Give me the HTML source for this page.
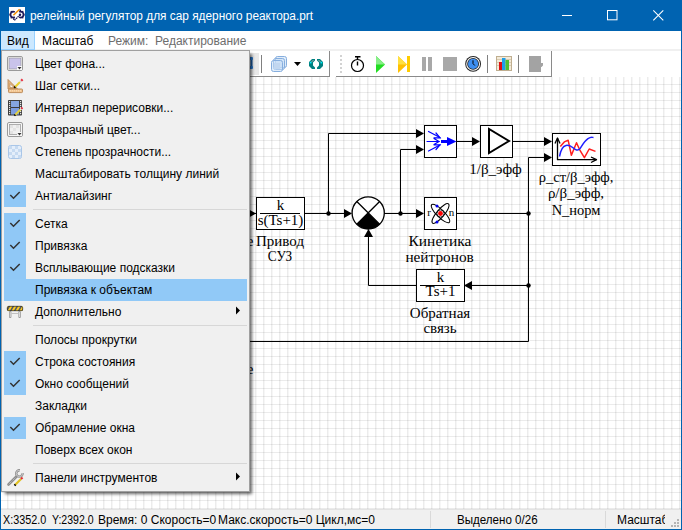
<!DOCTYPE html>
<html><head><meta charset="utf-8">
<style>
*{box-sizing:border-box}
html,body{margin:0;padding:0}
body{width:682px;height:530px;overflow:hidden;position:relative;background:#fff;font-family:"Liberation Sans",sans-serif;font-size:12px;color:#000}
.a{position:absolute}
#title{left:0;top:0;width:682px;height:31px;background:#0063b1}
#title .t{left:30px;top:7px;color:#fff;font-size:12px;white-space:nowrap;line-height:18px;transform:scaleX(.988);transform-origin:0 0}
#menubar{left:1px;top:31px;width:680px;height:19px;background:#fff}
.mi{top:1px;height:19px;line-height:19px;white-space:nowrap}
#tbarea{left:1px;top:50px;width:680px;height:27px;background:#fff;border-top:1px solid #f0f0f0}
#canvas{left:1px;top:77px;width:680px;height:432px;background-color:#fff;
 background-image:linear-gradient(to right,rgba(0,0,0,.075) 1px,rgba(0,0,0,.035) 1px,rgba(0,0,0,.035) 2px,transparent 2px),linear-gradient(to bottom,rgba(0,0,0,.08) 1px,transparent 1px);
 background-size:8px 8px;background-position:6px 7px}
#status{left:1px;top:509px;width:680px;height:20px;background:#f0f0f0;border-top:1px solid #e3e3e3}
#status .s{top:2px;line-height:16px;white-space:pre}
#border{left:0;top:0;width:682px;height:530px;border:1px solid #0063b1;border-top:0}
#menu{left:1px;top:50px;width:249px;height:442px;background:#f0f0f0;border:1px solid #a0a0a0;box-shadow:3px 3px 3px -1px rgba(0,0,0,.6)}
.row{position:absolute;left:0;width:247px;height:22px}
.row .tx{position:absolute;left:33px;top:3px;line-height:16px;white-space:nowrap}
.chk{position:absolute;left:2px;width:22px;background:#90c8f6}
.sep{position:absolute;left:31px;width:214px;height:1px;background:#d7d7d7}
.arr{position:absolute;left:234px;width:0;height:0;border-left:4px solid #000;border-top:4px solid transparent;border-bottom:4px solid transparent}
.serif{font-family:"Liberation Serif",serif;font-size:14.67px;white-space:nowrap;line-height:16px}
</style></head><body>

<div id="title" class="a">
  <svg class="a" style="left:0;top:0" width="682" height="31" viewBox="0 0 682 31">
<rect x="9" y="7" width="16" height="16" fill="#fff"/>
<g fill="none" stroke="#1e1a5a" stroke-width="1.7">
 <path d="M14.8 12.1A2.9 2.9 0 1 0 14.8 17.1"/>
 <path d="M19.2 12.1A2.9 2.9 0 1 1 19.2 17.1"/>
</g>
<g fill="#1e1a5a">
 <rect x="9.6" y="13.8" width="1.6" height="1.6"/><rect x="10.6" y="10.9" width="1.6" height="1.6"/><rect x="10.6" y="16.8" width="1.6" height="1.6"/><rect x="13" y="18.3" width="1.6" height="1.5"/>
 <rect x="22.8" y="13.8" width="1.6" height="1.6"/><rect x="21.8" y="10.9" width="1.6" height="1.6"/><rect x="21.8" y="16.8" width="1.6" height="1.6"/><rect x="19.4" y="9.6" width="1.6" height="1.5"/>
</g>
<path d="M13.4 15.2L19.6 9.3" stroke="#f08c00" stroke-width="1.5"/>
<path d="M14.4 20.4L20 14.8" stroke="#1e1a5a" stroke-width="1.2" stroke-dasharray="1.6 0.6"/>
<circle cx="20" cy="14.8" r="1.2" fill="#1e1a5a"/>
<path d="M562 15.5H572" stroke="#fff" stroke-width="1"/>
<rect x="607.5" y="10.5" width="9.5" height="9.3" fill="none" stroke="#fff" stroke-width="1"/>
<path d="M653.3 10.3L663.3 20.3M663.3 10.3L653.3 20.3" stroke="#fff" stroke-width="1.05"/>
</svg>
<div class="a t">релейный регулятор для сар ядерного реактора.prt</div>
</div>
<div id="menubar" class="a">
  <div class="a" style="left:0;top:0;width:34px;height:19px;background:#cce8ff;border-right:1px solid #99d1ff;border-bottom:1px solid #99d1ff"></div>
  <div class="a mi" style="left:6px">Вид</div>
  <div class="a mi" style="left:41px">Масштаб</div>
  <div class="a mi" style="left:107px;color:#6d6d6d">Режим:&nbsp; Редактирование</div>
</div>
<div id="tbarea" class="a"></div>
<svg class="a" style="left:0;top:0" width="682" height="80" viewBox="0 0 682 80">
<rect x="35" y="49" width="646" height="1" fill="#f0f0f0"/><rect x="1" y="50" width="680" height="1" fill="#f0f0f0"/>
<rect x="237" y="53" width="22" height="22" fill="#e8e8e8"/>
<path d="M251.5 58V68" stroke="#1e5fa8" stroke-width="2"/><rect x="249" y="57" width="4" height="3" rx="1" fill="#2a7ad0"/><rect x="249" y="66" width="4" height="3" rx="1" fill="#2a7ad0"/>
<rect x="261" y="55" width="1" height="18" fill="#808080"/>
<g fill="rgba(200,222,246,.55)" stroke="#86aede" stroke-width="1">
 <rect x="275.5" y="56.5" width="11" height="11" rx="2"/>
 <rect x="273.5" y="58.5" width="11" height="11" rx="2"/>
 <rect x="271.5" y="60.5" width="11" height="11" rx="2"/>
</g>
<rect x="274" y="63" width="6" height="6" fill="#c2d7f0"/>
<path d="M294 62H301L297.5 66Z" fill="#000"/>
<path d="M312 59H315V60.5L313 62.5V65.5L315 67.5V69H312L309 66V62Z M320 59H317V60.5L319 62.5V65.5L317 67.5V69H320L323 66V62Z" fill="#008080"/>
<path d="M311 62.5L313.5 60M321 62.5L318.5 60" stroke="#d8b8b0" stroke-width="0.8"/>
<rect x="309.8" y="61.8" width="1.6" height="1.6" fill="#00f0ff"/><rect x="320.6" y="61.8" width="1.6" height="1.6" fill="#00f0ff"/>
<rect x="1" y="76" width="329" height="1" fill="#8a8a8a"/><rect x="329" y="51" width="1" height="26" fill="#8a8a8a"/>
<rect x="336" y="76" width="216" height="1" fill="#8a8a8a"/><rect x="551" y="51" width="1" height="26" fill="#8a8a8a"/>
<g fill="#d2d2d2"><rect x="340" y="55" width="2" height="2"/><rect x="340" y="59" width="2" height="2"/><rect x="340" y="63" width="2" height="2"/><rect x="340" y="67" width="2" height="2"/><rect x="340" y="71" width="2" height="2"/></g>
<g stroke="#000" fill="none" stroke-width="1.2">
 <circle cx="357.5" cy="65.5" r="6"/>
 <path d="M355 56.7H360.5M357.5 56.7V59.5M357.5 61.5V65.5" stroke-width="1.4"/>
</g>
<path d="M376 56L385 64.5L376 73Z" fill="#22dd22"/><path d="M376 56L385 64.5H376Z" fill="#88ee88"/>
<path d="M398 56L407 64.5L398 73Z" fill="#ffc000"/><path d="M398 56L407 64.5H398Z" fill="#ffe040"/><rect x="407" y="56" width="3" height="16" fill="#ffcc00"/>
<rect x="422" y="57" width="4" height="14" fill="#a8a8a8"/><rect x="428" y="57" width="4" height="14" fill="#a8a8a8"/>
<rect x="443" y="57" width="14" height="14" fill="#a8a8a8"/>
<circle cx="473.1" cy="63.9" r="7.9" fill="#222"/><circle cx="473.1" cy="63.9" r="6.9" fill="#fff"/><circle cx="473.1" cy="63.9" r="5.9" fill="#222"/><circle cx="473.1" cy="63.9" r="5.1" fill="#3d8ef0"/>
<path d="M473 60.3V63.6L474.8 65.5" stroke="#000" stroke-width="1" fill="none"/>
<rect x="487" y="55" width="1" height="18" fill="#808080"/>
<rect x="496.5" y="56.5" width="15" height="14" fill="#f3ead8" stroke="#bfae90"/>
<g stroke="#d8cbb2"><path d="M497 59.5H511M497 62.5H511M497 65.5H511"/></g>
<rect x="499" y="62" width="3" height="8" fill="#e01010"/><rect x="502" y="58" width="3.5" height="12" fill="#1f9fe8"/><rect x="505.5" y="60" width="3.5" height="10" fill="#50c030"/>
<rect x="518" y="55" width="1" height="18" fill="#808080"/>
<path d="M529 56H541V63H543V65.5L541.5 67H541V72H529Z" fill="#a3a3a3"/>
</svg>

<div id="canvas" class="a"></div>
<svg class="a" style="left:0;top:0" width="682" height="530" viewBox="0 0 682 530">
<defs><clipPath id="cv"><rect x="1" y="77" width="680" height="432"/></clipPath></defs>
<g clip-path="url(#cv)" font-family="Liberation Serif" font-size="15" text-anchor="middle" fill="#000">
<g stroke="#000" stroke-width="1" fill="none">
 <path d="M200 213.5H256 M304 213.5H345 M328.5 213.5V133.5H417 M384 213.5H417 M400.5 213.5V149.5H417 M456 141.5H473 M512 141.5H545 M528.5 157.5H545 M528.5 157.5V341.5H100 M456 213.5H528.5 M528.5 285.5H471 M416 285.5H368.5V236"/>
 <rect x="256.5" y="197.5" width="48" height="32" fill="#fff"/>
 <rect x="424.5" y="125.5" width="32" height="32" fill="#fff"/>
 <rect x="480.5" y="125.5" width="32" height="32" fill="#fff"/>
 <rect x="552.5" y="133.5" width="48" height="32" fill="#fff"/>
 <rect x="424.5" y="197.5" width="32" height="32" fill="#fff"/>
 <rect x="416.5" y="269.5" width="48" height="32" fill="#fff"/>
 <path d="M260 213.5H300 M420 285.5H460"/>
</g>
<g stroke="none" fill="#000">
 <path d="M248 209L256 213.5L248 218Z M344 209L352 213.5L344 218Z M416 129L424 133.5L416 138Z M416 145L424 149.5L416 154Z M416 209L424 213.5L416 218Z M472 137L480 141.5L472 146Z M544 137L552 141.5L544 146Z M544 153L552 157.5L544 162Z M472 281L464 285.5L472 290Z M364 237L368.5 229L373 237Z"/>
 <circle cx="328.5" cy="213.5" r="2.2"/><circle cx="400.5" cy="213.5" r="2.2"/><circle cx="528.5" cy="213.5" r="2.2"/><circle cx="528.5" cy="285.5" r="2.2"/>
</g>
<g>
 <circle cx="368.2" cy="212.9" r="16.1" fill="#fff" stroke="#000" stroke-width="1.3"/>
 <path d="M368.2 212.9L356.8 224.3A16.1 16.1 0 0 0 379.6 224.3Z" fill="#000"/>
 <path d="M356.8 201.5L379.6 224.3M379.6 201.5L356.8 224.3" stroke="#000" stroke-width="1.3"/>
</g>
<path d="M489 129V153L509 141Z" fill="none" stroke="#000" stroke-width="2" stroke-linejoin="miter"/>
<g stroke="#0000ff" fill="none" stroke-width="1.2" stroke-linecap="round">
 <path d="M428.5 131.5L440 137.5M427 141.5H439M428.5 151L440 145"/>
 <path d="M434 137.8H440L436 133M434 138.5L439 141.5L434 144.5M434 144.8H440L436 149.5"/>
 <path d="M441 141.5H449" stroke-width="3" stroke-linecap="butt"/>
</g>
<path d="M456.5 141.5L447 137V146Z" fill="#0000ff"/>
<g fill="none" stroke-width="1.5" stroke-linejoin="round">
 <path d="M557.5 138V159.7H596.5" stroke="#000" stroke-width="1.3"/>
 <path d="M555 143.5L557.5 138L560 143.5M591 157L596.5 159.7L591 162.5" stroke="#000" stroke-width="1.3"/>
 <path d="M560.3 146.6L564.3 141.9L568.2 140.3L571.4 155.3L576.5 142.7L579.7 149.8L584.4 157.7L589.2 149L595.5 151.4" stroke="#ff2020"/>
 <path d="M559.5 156.5C560.5 151 562.5 146 566 145.4S571 146 573 147.8S578 151.5 580 148.6S584.5 141 588 138.7S592 137.5 593.5 137.5" stroke="#2020ff"/>
</g>
<g>
 <ellipse cx="440.5" cy="213.5" rx="12.5" ry="3.8" transform="rotate(45 440.5 213.5)" fill="none" stroke="#000" stroke-width="1"/>
 <ellipse cx="440.5" cy="213.5" rx="12.5" ry="3.8" transform="rotate(-50 440.5 213.5)" fill="none" stroke="#000" stroke-width="1"/>
 <circle cx="440.5" cy="213.5" r="3.6" fill="none" stroke="#000" stroke-width="0.8"/>
 <circle cx="440.5" cy="213.5" r="2.4" fill="#ff0000"/>
 <circle cx="437" cy="206" r="1.5" fill="#0000ee"/>
 <circle cx="437" cy="222" r="1.5" fill="#0000ee"/>
 <text x="429" y="215.5" font-size="11">r</text><text x="451.5" y="215.5" font-size="11">n</text>
</g>
<text x="280.5" y="209.5">k</text>
<text x="280.5" y="225">s(Ts+1)</text>
<text x="440.5" y="281.5">k</text>
<text x="440.5" y="296">Ts+1</text>
<text x="280" y="246">Привод</text><text x="280" y="261" textLength="24.5" lengthAdjust="spacingAndGlyphs">СУЗ</text>
<text x="440" y="246" textLength="63" lengthAdjust="spacingAndGlyphs">Кинетика</text><text x="439.6" y="261.5" textLength="68.4" lengthAdjust="spacingAndGlyphs">нейтронов</text>
<text x="440" y="317.5">Обратная</text><text x="440" y="333">связь</text>
<text x="495.5" y="174">1/β_эфф</text>
<text x="576" y="181.5" textLength="74.6" lengthAdjust="spacingAndGlyphs">ρ_ст/β_эфф,</text><text x="576" y="198">ρ/β_эфф,</text><text x="576" y="214.5" textLength="48.7" lengthAdjust="spacingAndGlyphs">N_норм</text>
<text x="253.5" y="245.5" text-anchor="end">е</text><text x="253.5" y="374" text-anchor="end">е</text>
</g>
</svg>

<div id="status" class="a">
  <div class="a s" style="left:1.6px;transform:scaleX(.9);transform-origin:0 0">X:3352.0</div>
  <div class="a s" style="left:50.8px;transform:scaleX(.878);transform-origin:0 0">Y:2392.0</div>
  <div class="a s" style="left:97px">Время: 0 Скорость=0</div>
  <div class="a s" style="left:217px">Макс.скорость=0 Цикл,мс=0</div>
  <div class="a" style="left:429px;top:1px;width:1px;height:17px;background:#d9d9d9"></div>
  <div class="a s" style="left:455.5px;transform:scaleX(.965);transform-origin:0 0">Выделено 0/26</div>
  <div class="a" style="left:604px;top:1px;width:1px;height:17px;background:#d9d9d9"></div>
  <div class="a s" style="left:616px;width:48px;overflow:hidden">Масштаб</div>
  <svg class="a" style="left:670px;top:9px" width="10" height="10"><g fill="#b4b4b4"><rect x="6" y="0" width="2" height="2"/><rect x="3" y="3" width="2" height="2"/><rect x="6" y="3" width="2" height="2"/><rect x="0" y="6" width="2" height="2"/><rect x="3" y="6" width="2" height="2"/><rect x="6" y="6" width="2" height="2"/></g></svg>
</div>
<div id="border" class="a"></div>

<div id="menu" class="a">
  <div class="row" style="top:2px"><div class="tx">Цвет фона...</div></div>
  <div class="row" style="top:24px"><div class="tx">Шаг сетки...</div></div>
  <div class="row" style="top:46px"><div class="tx">Интервал перерисовки...</div></div>
  <div class="row" style="top:68px"><div class="tx">Прозрачный цвет...</div></div>
  <div class="row" style="top:90px"><div class="tx">Степень прозрачности...</div></div>
  <div class="row" style="top:112px"><div class="tx">Масштабировать толщину линий</div></div>
  <div class="chk" style="top:134px;height:22px"></div>
  <div class="row" style="top:134px"><div class="tx">Антиалайзинг</div></div>
  <div class="sep" style="top:158px"></div>
  <div class="chk" style="top:162px;height:66px"></div>
  <div class="row" style="top:162px"><div class="tx">Сетка</div></div>
  <div class="row" style="top:184px"><div class="tx">Привязка</div></div>
  <div class="row" style="top:206px"><div class="tx">Всплывающие подсказки</div></div>
  <div class="row" style="top:228px;left:2px;width:243px;background:#91c9f7"><div class="tx" style="left:31px">Привязка к объектам</div></div>
  <div class="row" style="top:250px"><div class="tx">Дополнительно</div></div>
  <div class="sep" style="top:274px"></div>
  <div class="row" style="top:278px"><div class="tx">Полосы прокрутки</div></div>
  <div class="chk" style="top:300px;height:44px"></div>
  <div class="row" style="top:300px"><div class="tx">Строка состояния</div></div>
  <div class="row" style="top:322px"><div class="tx">Окно сообщений</div></div>
  <div class="row" style="top:344px"><div class="tx">Закладки</div></div>
  <div class="chk" style="top:366px;height:22px"></div>
  <div class="row" style="top:366px"><div class="tx">Обрамление окна</div></div>
  <div class="row" style="top:388px"><div class="tx">Поверх всех окон</div></div>
  <div class="sep" style="top:412px"></div>
  <div class="row" style="top:416px"><div class="tx">Панели инструментов</div></div>
<svg class="a" style="left:-2px;top:-51px" width="260" height="500" viewBox="0 0 260 500">
<g fill="none" stroke="#333" stroke-width="1.5">
 <path d="M10.3 195L13.5 198.2L19.7 192"/>
 <path d="M10.3 223L13.5 226.2L19.7 220"/>
 <path d="M10.3 245L13.5 248.2L19.7 242"/>
 <path d="M10.3 267L13.5 270.2L19.7 264"/>
 <path d="M10.3 361L13.5 364.2L19.7 358"/>
 <path d="M10.3 383L13.5 386.2L19.7 380"/>
 <path d="M10.3 427L13.5 430.2L19.7 424"/>
</g>
<rect x="7.5" y="56.5" width="15" height="14" rx="1.5" fill="#fafafa" stroke="#9a9a9a"/>
<rect x="9" y="58" width="12" height="11" fill="#c9c3ea" stroke="#8c8c8c" stroke-width="0.6"/>
<rect x="17" y="66" width="5" height="4" fill="#fafafa"/><path d="M17.5 67H21.5L19.5 69.5Z" fill="#333"/>
<path d="M8 79.5L17.5 89H8Z" fill="#e6b47e" stroke="#b88652" stroke-width="0.9"/>
<path d="M10 83.6L14 87.6H10Z" fill="#fafafa" stroke="#b88652" stroke-width="0.7"/>
<rect x="8.5" y="89" width="14" height="3.6" rx="0.8" fill="#f2c48e" stroke="#b88652" stroke-width="0.9"/>
<g fill="#fbe2c0"><rect x="10" y="90.3" width="1" height="1"/><rect x="12" y="90.3" width="1" height="1"/><rect x="14" y="90.3" width="1" height="1"/><rect x="16" y="90.3" width="1" height="1"/><rect x="18" y="90.3" width="1" height="1"/><rect x="20" y="90.3" width="1" height="1"/></g>
<path d="M14.8 87.2L20 82" stroke="#e8d030" stroke-width="2"/><path d="M20 82L21.2 80.8" stroke="#d8d8d8" stroke-width="2"/><path d="M21.2 80.8L22.6 79.4" stroke="#e83040" stroke-width="2.2"/><path d="M14.2 87.8L15.2 86.8" stroke="#000" stroke-width="2"/>
<rect x="8" y="100" width="14" height="15.5" rx="0.8" fill="#3c3c3c"/>
<rect x="11" y="101" width="8" height="6" fill="#85a5e0"/><rect x="11" y="108" width="8" height="6.5" fill="#7d9de0"/>
<g fill="#e6e6e6"><rect x="9" y="101" width="1.2" height="1.2"/><rect x="20" y="101" width="1.2" height="1.2"/><rect x="9" y="103" width="1.2" height="1.2"/><rect x="20" y="103" width="1.2" height="1.2"/><rect x="9" y="105" width="1.2" height="1.2"/><rect x="20" y="105" width="1.2" height="1.2"/><rect x="9" y="107" width="1.2" height="1.2"/><rect x="20" y="107" width="1.2" height="1.2"/><rect x="9" y="109" width="1.2" height="1.2"/><rect x="20" y="109" width="1.2" height="1.2"/><rect x="9" y="111" width="1.2" height="1.2"/><rect x="20" y="111" width="1.2" height="1.2"/><rect x="9" y="113" width="1.2" height="1.2"/><rect x="20" y="113" width="1.2" height="1.2"/></g>
<path d="M15 115L20.5 109.5" stroke="#e0d040" stroke-width="1.9"/><path d="M20.5 109.5L21.3 108.7" stroke="#fff" stroke-width="1.9"/><path d="M21.3 108.7L22.5 107.5" stroke="#e83040" stroke-width="2"/><path d="M14.4 115.6L15.3 114.7" stroke="#000" stroke-width="1.8"/>
<rect x="7.5" y="122.5" width="15" height="14" rx="1.5" fill="#f6f6f6" stroke="#9a9a9a"/>
<rect x="9.5" y="124.5" width="11" height="10" fill="#f0f0f0" stroke="#9c9c9c" stroke-width="0.8"/>
<g fill="#e3e3e3"><rect x="10" y="125" width="3" height="3"/><rect x="16" y="125" width="3" height="3"/><rect x="13" y="128" width="3" height="3"/><rect x="10" y="131" width="3" height="3"/></g>
<rect x="17" y="132" width="5" height="4" fill="#f6f6f6"/><path d="M17.5 133H21.5L19.5 135.5Z" fill="#333"/>
<rect x="8.5" y="145.5" width="13" height="13" rx="2" fill="#e4eefa" stroke="#a9c6e8"/>
<g fill="#c6daf1"><rect x="9" y="146" width="3" height="3"/><rect x="15" y="146" width="3" height="3"/><rect x="12" y="149" width="3" height="3"/><rect x="18" y="149" width="3" height="3"/><rect x="9" y="152" width="3" height="3"/><rect x="15" y="152" width="3" height="3"/><rect x="12" y="155" width="3" height="3"/><rect x="18" y="155" width="3" height="3"/></g>
<defs><clipPath id="bar"><rect x="7" y="306" width="16" height="5" rx="1.5"/></clipPath></defs>
<rect x="7" y="306" width="16" height="5" rx="1.5" fill="#f8c820"/>
<g clip-path="url(#bar)" stroke="#505868" stroke-width="1.5"><path d="M6 312L10 305M10 312L14 305M14 312L18 305M18 312L22 305M22 312L26 305"/></g>
<rect x="7.3" y="306.3" width="15.4" height="4.4" rx="1.5" fill="none" stroke="#2a2a2a" stroke-width="0.7"/>
<rect x="9" y="311" width="2.4" height="7" rx="1" fill="#9a9a9a"/><rect x="18.4" y="311" width="2.4" height="7" rx="1" fill="#9a9a9a"/>
<rect x="9.8" y="312" width="0.8" height="5" fill="#e8e8e8"/><rect x="19.2" y="312" width="0.8" height="5" fill="#e8e8e8"/>
<rect x="11.4" y="313" width="7" height="1" fill="#c0c0c0"/>
<path d="M8.5 484.5L16.5 476.5" stroke="#8c8c8c" stroke-width="2.6" stroke-linecap="round"/>
<path d="M8.8 484.2L16.2 476.8" stroke="#e8e8e8" stroke-width="0.7" stroke-dasharray="1 1"/>
<path d="M22.6 473.2A3.2 3.2 0 1 1 19.9 470.3" fill="none" stroke="#8c8c8c" stroke-width="2.4"/>
<path d="M22.6 473.2A3.2 3.2 0 1 1 19.9 470.3" fill="none" stroke="#d0d0d0" stroke-width="0.9"/>
<path d="M15 485L21 479" stroke="#e0c020" stroke-width="2.2"/><path d="M21 479L22.5 477.5" stroke="#e03030" stroke-width="2.2"/><path d="M14.5 485.5L15.5 484.5" stroke="#000" stroke-width="2"/>
<path d="M236 306.5L240 310.5L236 314.5Z M236 472.5L240 476.5L236 480.5Z" fill="#000"/>
</svg>
</div>
</body></html>
